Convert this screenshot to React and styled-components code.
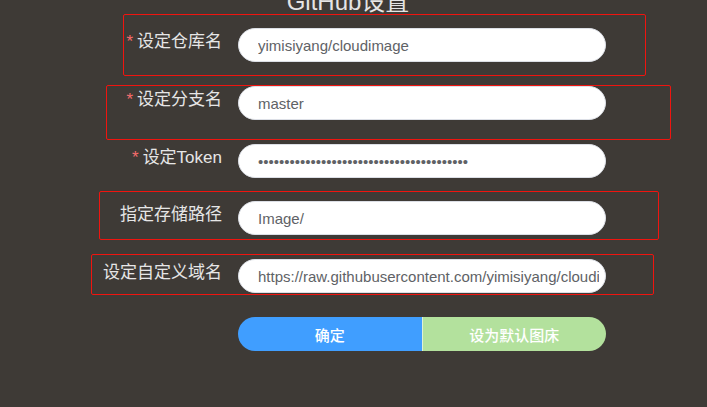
import React from "react";
import styled, { createGlobalStyle } from "styled-components";

const GlobalStyle = createGlobalStyle`
  html, body {
    margin: 0;
    padding: 0;
    background: #3e3a36;
    overflow: hidden;
  }
  body {
    font-family: "Liberation Sans", "Noto Sans CJK SC", sans-serif;
  }
`;

const Page = styled.div`
  width: 707px;
  height: 407px;
  background: #3e3a36;
`;

const Title = styled.h2`
  margin: -10px 0 0;
  padding-right: 11px;
  height: 24px;
  font-size: 24px;
  line-height: 24px;
  font-weight: normal;
  text-align: center;
  color: #e4e4e4;
`;

// each form item keeps its label edge at x=222 and input at x=238,
// whatever the (odd) outline box around it
const Item = styled.div`
  box-sizing: border-box;
  margin-left: ${p => p.left}px;
  margin-top: ${p => p.gap}px;
  width: ${p => p.width}px;
  height: ${p => p.height}px;
  padding-top: ${p => p.top}px;
  border: 1px solid ${p => (p.outlined ? "#f0140f" : "transparent")};
  border-radius: 2px;
  display: flex;
  align-items: flex-start;
  gap: 16px;
`;

const Label = styled.label`
  width: ${p => p.w}px;
  flex-shrink: 0;
  text-align: right;
  font-size: 17px;
  line-height: 27px;
  color: #e6e6e6;
  white-space: nowrap;
  direction: rtl;
  unicode-bidi: plaintext;
`;

const Star = styled.span`
  color: #f56c6c;
  margin-right: 4px;
`;

const Input = styled.input`
  box-sizing: border-box;
  width: 368px;
  height: 34px;
  flex-shrink: 0;
  padding: 0 6px 0 19px;
  border: 1px solid #dcdfe6;
  border-radius: 17px;
  background: #fff;
  color: #606266;
  font-family: "Liberation Sans", "Noto Sans CJK SC", sans-serif;
  font-size: 15px;
  outline: none;
`;

const ButtonGroup = styled.div`
  display: flex;
  width: 368px;
  height: 34px;
  margin: 22px 0 0 238px;
  border-radius: 17px;
  overflow: hidden;
`;

const Button = styled.button`
  flex: 1;
  border: none;
  border-left: ${p => (p.divider ? "1px solid #dff0d6" : "none")};
  background: ${p => p.bg};
  color: #fff;
  font-family: "Liberation Sans", "Noto Sans CJK SC", sans-serif;
  font-size: 15px;
  font-weight: 500;
  cursor: pointer;
`;

const fields = [
  { label: "设定仓库名", required: true, value: "yimisiyang/cloudimage", box: { left: 123, width: 523, height: 62, top: 13, gap: 0, outlined: true } },
  { label: "设定分支名", required: true, value: "master", box: { left: 106, width: 565, height: 55, top: 0, gap: 9, outlined: true } },
  { label: "设定Token", required: true, value: "ghp0123456789abcdefghijklmnopqrstuvwxyz1", type: "password", box: { left: 91, width: 563, height: 35, top: 0, gap: 3, outlined: false } },
  { label: "指定存储路径", value: "Image/", box: { left: 99, width: 560, height: 49, top: 9, gap: 13, outlined: true } },
  { label: "设定自定义域名", value: "https://raw.githubusercontent.com/yimisiyang/cloudimage/master/", box: { left: 91, width: 563, height: 41, top: 4, gap: 14, outlined: true } }
];

export default function App() {
  return (
    <Page>
      <GlobalStyle />
      <Title>GitHub设置</Title>
      {fields.map(f => (
        <Item key={f.label} {...f.box}>
          <Label w={222 - f.box.left - 1}>
            {f.required && <Star>*</Star>}
            {f.label}
          </Label>
          <Input type={f.type || "text"} defaultValue={f.value} />
        </Item>
      ))}
      <ButtonGroup>
        <Button bg="#409eff">确定</Button>
        <Button bg="#b3e19d" divider>设为默认图床</Button>
      </ButtonGroup>
    </Page>
  );
}
